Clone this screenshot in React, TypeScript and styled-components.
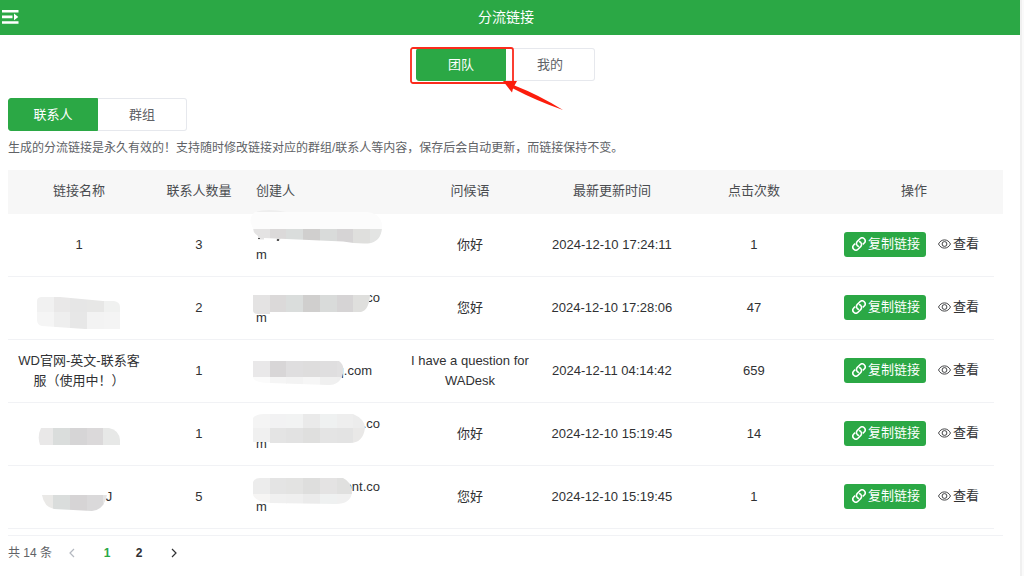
import React from "react";
import styled, { createGlobalStyle } from "styled-components";

const GREEN = "#2ba845";

const GlobalStyle = createGlobalStyle`
  * { box-sizing: border-box; }
  body {
    margin: 0;
    background: #fafafa;
    color: #303133;
    font-family: "Liberation Sans", "Noto Sans CJK SC", sans-serif;
    font-size: 13px;
    line-height: 20px;
  }
  button { font: inherit; cursor: pointer; }
`;

const Page = styled.div`
  min-height: 100vh;
  margin-right: 2px;
  border-right: 2px solid #f0f0f0;
  background: #fff;
`;

const Header = styled.header`
  display: grid;
  grid-template-columns: 20px 1fr 28px;
  align-items: center;
  height: 35px;
  padding-bottom: 2px;
  background: ${GREEN};
  color: #fff;
`;

const MenuButton = styled.button`
  display: flex;
  width: 20px;
  padding: 0 0 0 2px;
  border: 0;
  background: none;
  color: inherit;
`;

const Title = styled.h1`
  margin: 0;
  font-size: 14px;
  font-weight: 400;
  text-align: center;
`;

const Content = styled.main`
  padding: 13px 17px 0 8px;
`;

const ScopeBar = styled.div`
  display: flex;
  justify-content: center;
  margin-bottom: 17px;
`;

const TabGroup = styled.div`
  position: relative;
  display: flex;
  width: 179px;
  height: 33px;
`;

const Tab = styled.button<{ $active?: boolean }>`
  flex: 1;
  padding: 0;
  border: 1px solid ${(p) => (p.$active ? GREEN : "#e6e8ed")};
  background: ${(p) => (p.$active ? GREEN : "#fff")};
  color: ${(p) => (p.$active ? "#fff" : "#606266")};
  &:first-of-type { border-radius: 3px 0 0 3px; }
  &:last-of-type { border-left: 0; border-radius: 0 3px 3px 0; }
`;

const Callout = styled.svg`
  position: absolute;
  top: -3px;
  left: -7px;
  pointer-events: none;
`;

const Hint = styled.p`
  margin: 7px 0 12px;
  color: #606266;
  font-size: 12px;
`;

const LinkTable = styled.table`
  width: 100%;
  table-layout: fixed;
  border-collapse: separate;
  border-spacing: 0;
`;

const Column = styled.col<{ $width?: number }>`
  width: ${(p) => (p.$width ? `${p.$width}px` : "auto")};
`;

const HeadCell = styled.th<{ $left?: boolean }>`
  height: 44px;
  padding: 0 8px 2px;
  background: #f7f7f7;
  color: #4a4c50;
  font-weight: 400;
  text-align: ${(p) => (p.$left ? "left" : "center")};
`;

const Cell = styled.td<{ $left?: boolean }>`
  position: relative;
  height: 63px;
  padding: 0 8px;
  border-bottom: 1px solid #f1f2f5;
  text-align: ${(p) => (p.$left ? "left" : "center")};
`;

const Gutter = styled.td`
  padding: 0;
`;

const MailLine = styled.div<{ $width: number }>`
  width: ${(p) => p.$width}px;
  min-height: 20px;
  text-align: right;
`;

const NameTail = styled.div`
  padding-left: 60px;
`;

const Mosaic = styled.svg`
  position: absolute;
  top: -1px;
  left: 0;
  overflow: visible;
  pointer-events: none;
`;

const Actions = styled.div`
  display: flex;
  align-items: center;
  gap: 12px;
  padding: 0 0 2px 11px;
`;

const CopyButton = styled.button`
  display: flex;
  align-items: center;
  gap: 2px;
  height: 25px;
  padding: 0 6px 0 8px;
  border: 0;
  border-radius: 3px;
  background: ${GREEN};
  color: #fff;
  white-space: nowrap;
`;

const ViewButton = styled.button`
  display: flex;
  align-items: center;
  gap: 2px;
  padding: 0;
  border: 0;
  background: none;
  color: #303133;
  white-space: nowrap;
`;

const Pagination = styled.nav`
  display: flex;
  align-items: center;
  margin-top: 6px;
  padding-top: 7px;
  border-top: 1px solid #f1f2f5;
  color: #606266;
  font-size: 12px;
`;

const Total = styled.span`
  width: 48px;
  white-space: nowrap;
`;

const PageButton = styled.button<{ $active?: boolean }>`
  display: flex;
  align-items: center;
  justify-content: center;
  width: 32px;
  height: 20px;
  padding: 0;
  border: 0;
  background: none;
  color: ${(p) => (p.$active ? GREEN : "#303133")};
  font-weight: 700;
  &:disabled { color: #b4b8c0; }
`;

const Pages = styled.div`
  display: flex;
  margin: 0 3px;
`;

const MenuIcon = () => (
  <svg width="17" height="14" viewBox="0 0 17 14" fill="currentColor" aria-hidden="true">
    <path d="M0 0h16.5v2.5H0zM0 5.6h10.5v2.6H0zM0 11.3h16.5v2.5H0zM12 3.6l4.3 3.3-4.3 3.3z" />
  </svg>
);

const LinkIcon = () => (
  <svg width="14" height="14" viewBox="0 0 14 14" fill="none" stroke="currentColor" strokeWidth="1.6" aria-hidden="true">
    <g transform="rotate(-45 7 7)">
      <path d="M5.200 8.700A3 3 0 0 1 7.400 4H11.400A3 3 0 0 1 11.400 10H9.400" />
      <path d="M8.800 5.300A3 3 0 0 1 6.600 10H2.600A3 3 0 0 1 2.600 4H4.600" />
    </g>
  </svg>
);

const EyeIcon = () => (
  <svg width="13" height="12" viewBox="0 0 13 12" fill="none" stroke="currentColor" strokeWidth="0.9" aria-hidden="true">
    <path d="M.5 6C1.900 3.300 3.900 1.900 6.500 1.900S11.100 3.300 12.500 6C11.100 8.700 9.100 10.100 6.500 10.100S1.900 8.700.5 6z" />
    <circle cx="6.500" cy="6" r="2.400" />
  </svg>
);

const Chevron = ({ back = false }: { back?: boolean }) => (
  <svg width="12" height="12" viewBox="0 0 12 12" fill="none" stroke="currentColor" strokeWidth="1.2" aria-hidden="true">
    <path d={back ? "M8 2 4 6l4 4" : "M4 2l4 4-4 4"} />
  </svg>
);

type Tile = [x: number, y: number, width: number, height: number, fill: string];
interface Mask {
  outline: string;
  tiles: Tile[];
}

const band = (y: number, height: number, fills: string[], start = 5, step = 16.7): Tile[] =>
  fills.map((fill, i) => [start + i * step, y, step + 0.2, height, fill]);

const Redaction = ({ id, mask }: { id: string; mask: Mask }) => (
  <Mosaic width="1" height="1" aria-hidden="true">
    <clipPath id={id}>
      <path d={mask.outline} />
    </clipPath>
    <g clipPath={`url(#${id})`} shapeRendering="crispEdges">
      {mask.tiles.map(([x, y, width, height, fill], i) => (
        <rect key={i} x={x} y={y} width={width} height={height} fill={fill} />
      ))}
    </g>
  </Mosaic>
);

interface Row {
  name?: React.ReactNode;
  nameMask?: Mask;
  contacts: number;
  mail: string;
  mailWidth?: number;
  wrapped?: boolean;
  mailMask: Mask;
  greeting: string;
  updated: string;
  clicks: number;
}

const GREYS = ["#e4e3e3", "#dbd9d9", "#dadddc", "#d0cfce", "#d9dbda", "#d6d4d5", "#dfdfdd", "#e3e4e3"];

const rows: Row[] = [
  {
    name: "1",
    contacts: 3,
    mail: "",
    wrapped: true,
    mailMask: {
      outline:
        "M7-1Q20-5 38-1H120Q135 2 134 15Q133 29 120 30.500Q108 31 95 28.500L16 25V26.500H10V23Q5 20 5 15Q-1 6 7-1zM29 25h4l-2 3h-3z",
      tiles: [
        [9, -3, 30, 3, "#eeeeee"],
        [0, -1, 136, 17, "#fcfcfc"],
        ...band(15.500, 16, GREYS),
        [10, 24.500, 2, 1, "#555"],
        [29, 26, 2, 2, "#555"],
      ],
    },
    greeting: "你好",
    updated: "2024-12-10 17:24:11",
    clicks: 1,
  },
  {
    nameMask: {
      outline: "M29 25Q29 21 34 21H52L95 25H106Q112 26 112 31V53H77L34 50Q29 49 29 44z",
      tiles: [
        ...band(20, 16, ["#f1f1f1", "#e9e8e8", "#e6e6e6", "#e7e7e6", "#f0f1f0"], 29),
        ...band(36, 18, ["#f5f5f5", "#eeeeee", "#e7e7e7", "#f3f3f3", "#f4f4f4"], 29),
      ],
    },
    contacts: 2,
    mail: "co",
    wrapped: true,
    mailMask: {
      outline: "M5 19H122Q121 34 113 36H22V38H10Q5 38 5 34z",
      tiles: band(19, 20, GREYS),
    },
    greeting: "您好",
    updated: "2024-12-10 17:28:06",
    clicks: 47,
  },
  {
    name: (
      <>
        WD官网-英文-联系客
        <br />
        服（使用中！）
      </>
    ),
    contacts: 1,
    mail: "q.com",
    mailWidth: 116,
    mailMask: {
      outline: "M5 22H91Q98 27 94 38Q89 47 80 46L22 44Q5 44 5 38z",
      tiles: [
        ...band(22, 16, ["#e9e8e9", "#d8d6d7", "#dfdedf", "#dedddd", "#dfdedf", "#e1e0e1"]),
        ...band(38, 9, ["#fbfbfb", "#f5f5f5", "#f3f3f3", "#f6f6f6", "#f0f0f0", "#efefef"]),
      ],
    },
    greeting: "I have a question for WADesk",
    updated: "2024-12-11 04:14:42",
    clicks: 659,
  },
  {
    nameMask: {
      outline: "M33 26H101Q111 28 112 38V43H32Q29 34 33 26z",
      tiles: band(26, 17, ["#e9e8e8", "#dadddc", "#d6d5d6", "#dbd9da", "#e7e8e7"], 28.500),
    },
    contacts: 1,
    mail: ".co",
    wrapped: true,
    mailMask: {
      outline: "M5 16Q8 12 16 12H105Q117 17 117 26Q115 41 102 41H22V40H5z",
      tiles: [
        ...band(12, 14, ["#f4f4f4", "#f2f2f3", "#f2f3f3", "#eaeaea", "#eff1f1", "#eeeeee", "#ececec"]),
        ...band(26, 16, ["#f0f0f0", "#e4e4e4", "#e2e2e2", "#dfdfde", "#e4e4e4", "#e3e3e3", "#e9e8e7"]),
      ],
    },
    greeting: "你好",
    updated: "2024-12-10 15:19:45",
    clicks: 14,
  },
  {
    name: <NameTail>J</NameTail>,
    nameMask: {
      outline: "M34 30H99Q96 45 84 46L46 44Q36 42 34 30z",
      tiles: band(30, 17, ["#eae9e7", "#dadddc", "#d6d4d5", "#dad9da", "#e5e5e5"], 28.500),
    },
    contacts: 5,
    mail: "ont.co",
    wrapped: true,
    mailMask: {
      outline: "M5 17Q7 13 12 13H95Q104 17 104 28Q102 39 88 39L22 38Q8 37 5 30z",
      tiles: [
        ...band(12, 17, ["#ececec", "#e4e4e4", "#e3e3e2", "#dededd", "#e4e3e3", "#e0e0df"]),
        ...band(29, 11, ["#f6f5f4", "#f0f0f0", "#efefef", "#ebebeb", "#eff1f1", "#f0f0f0"]),
      ],
    },
    greeting: "您好",
    updated: "2024-12-10 15:19:45",
    clicks: 1,
  },
];

export default function App() {
  return (
    <>
      <GlobalStyle />
      <Page>
        <Header>
          <MenuButton aria-label="菜单">
            <MenuIcon />
          </MenuButton>
          <Title>分流链接</Title>
        </Header>
        <Content>
          <ScopeBar>
            <TabGroup>
              <Tab $active aria-pressed="true">团队</Tab>
              <Tab aria-pressed="false">我的</Tab>
              <Callout width="156" height="70" viewBox="0 0 156 70" aria-hidden="true">
                <rect x="2" y="3" width="102" height="35" rx="2" fill="none" stroke="#fb2b1c" strokeWidth="1.800" />
                <path d="M94 36H108L105.500 40.500Q130 50 154 65Q128 56 104 43.500L103 47.500z" fill="#fc1d0c" />
              </Callout>
            </TabGroup>
          </ScopeBar>
          <TabGroup>
            <Tab $active aria-pressed="true">联系人</Tab>
            <Tab aria-pressed="false">群组</Tab>
          </TabGroup>
          <Hint>生成的分流链接是永久有效的！支持随时修改链接对应的群组/联系人等内容，保存后会自动更新，而链接保持不变。</Hint>
          <LinkTable>
            <colgroup>
              <Column />
              <Column $width={98} />
              <Column $width={151} />
              <Column />
              <Column />
              <Column />
              <Column $width={169} />
              <Column $width={9} />
            </colgroup>
            <thead>
              <tr>
                <HeadCell>链接名称</HeadCell>
                <HeadCell>联系人数量</HeadCell>
                <HeadCell $left>创建人</HeadCell>
                <HeadCell>问候语</HeadCell>
                <HeadCell>最新更新时间</HeadCell>
                <HeadCell>点击次数</HeadCell>
                <HeadCell colSpan={2}>操作</HeadCell>
              </tr>
            </thead>
            <tbody>
              {rows.map((row, i) => (
                <tr key={i}>
                  <Cell>
                    {row.name}
                    {row.nameMask && <Redaction id={`name-${i}`} mask={row.nameMask} />}
                  </Cell>
                  <Cell>{row.contacts}</Cell>
                  <Cell $left>
                    <MailLine $width={row.mailWidth ?? 124}>{row.mail}</MailLine>
                    {row.wrapped && <div>m</div>}
                    <Redaction id={`mail-${i}`} mask={row.mailMask} />
                  </Cell>
                  <Cell>{row.greeting}</Cell>
                  <Cell>{row.updated}</Cell>
                  <Cell>{row.clicks}</Cell>
                  <Cell>
                    <Actions>
                      <CopyButton>
                        <LinkIcon />
                        复制链接
                      </CopyButton>
                      <ViewButton>
                        <EyeIcon />
                        查看
                      </ViewButton>
                    </Actions>
                  </Cell>
                  <Gutter />
                </tr>
              ))}
            </tbody>
          </LinkTable>
          <Pagination aria-label="分页">
            <Total>共 14 条</Total>
            <PageButton disabled aria-label="上一页">
              <Chevron back />
            </PageButton>
            <Pages>
              <PageButton $active aria-current="page">1</PageButton>
              <PageButton>2</PageButton>
            </Pages>
            <PageButton aria-label="下一页">
              <Chevron />
            </PageButton>
          </Pagination>
        </Content>
      </Page>
    </>
  );
}
